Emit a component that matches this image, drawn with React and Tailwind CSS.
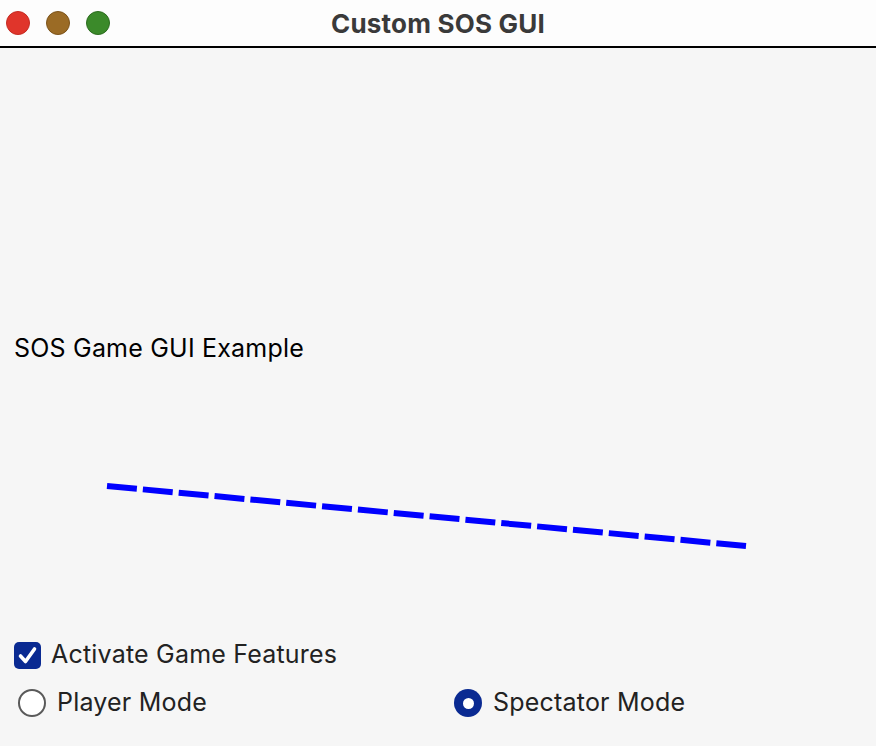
import React, { useState } from 'react';

const font = { fontFamily: 'Inter, "Noto Sans", sans-serif' };

function TrafficLights() {
  return (
    <div className="flex items-center gap-[16px] pl-[6px]">
      <span className="block w-[24px] h-[24px] rounded-full bg-[#e0352b] border border-[#c52b22]" />
      <span className="block w-[24px] h-[24px] rounded-full bg-[#9b6b25] border border-[#7c531a]" />
      <span className="block w-[24px] h-[24px] rounded-full bg-[#3b8a2a] border border-[#2c6c1f]" />
    </div>
  );
}

function DashedLine() {
  return (
    <svg width="876" height="268" className="block">
      <line
        x1="107"
        y1="124"
        x2="746"
        y2="184"
        stroke="#0000ff"
        strokeWidth="6"
        strokeDasharray="30 6"
      />
    </svg>
  );
}

function Radio({ checked }) {
  return checked ? (
    <span className="w-[28px] h-[28px] rounded-full bg-[#0a2a92] flex items-center justify-center">
      <span className="w-[11px] h-[11px] rounded-full bg-white" />
    </span>
  ) : (
    <span className="w-[28px] h-[28px] rounded-full border-2 border-[#5a5a5a] bg-white" />
  );
}

export default function App() {
  const [active, setActive] = useState(true);
  const [mode, setMode] = useState('spectator');

  return (
    <div className="w-[876px] h-[746px] flex flex-col bg-[#f6f6f6] overflow-hidden" style={font}>
      <div className="relative h-[48px] flex items-center bg-[#fdfdfd] border-b-2 border-black">
        <TrafficLights />
        <div className="absolute inset-0 flex items-center justify-center">
          <span className="text-[26px] font-bold text-[#3a3a3a] tracking-[0.2px]">Custom SOS GUI</span>
        </div>
      </div>

      <div className="flex flex-col">
        <div className="pt-[286px] pl-[14px] h-[314px] flex items-center">
          <span className="text-[25px] text-black leading-[28px] tracking-[0.2px]">SOS Game GUI Example</span>
        </div>

        <DashedLine />

        <label className="flex items-center h-[30px] pl-[14px] gap-[10px] mt-[10px] cursor-pointer">
          <span
            onClick={() => setActive(!active)}
            className="w-[27px] h-[27px] rounded-[5px] bg-[#0a2a92] flex items-center justify-center"
          >
            {active && (
              <svg width="21" height="21" viewBox="0 0 21 21">
                <path d="M3.5 11 L8.5 16.5 L17.5 4" fill="none" stroke="white" strokeWidth="3.6" strokeLinecap="round" strokeLinejoin="round" />
              </svg>
            )}
          </span>
          <span className="text-[25px] text-[#222] tracking-[0.2px]">Activate Game Features</span>
        </label>

        <div className="flex items-center h-[30px] mt-[18px]">
          <label className="flex items-center gap-[11px] pl-[18px] w-[454px] cursor-pointer" onClick={() => setMode('player')}>
            <Radio checked={mode === 'player'} />
            <span className="text-[25px] text-[#222] tracking-[0.2px]">Player Mode</span>
          </label>
          <label className="flex items-center gap-[11px] cursor-pointer" onClick={() => setMode('spectator')}>
            <Radio checked={mode === 'spectator'} />
            <span className="text-[25px] text-[#222] tracking-[0.2px]">Spectator Mode</span>
          </label>
        </div>
      </div>
    </div>
  );
}
